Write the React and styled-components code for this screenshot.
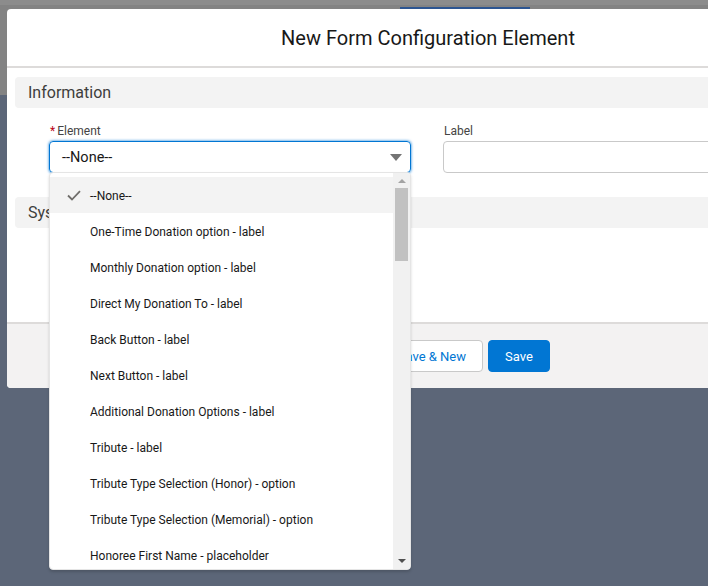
import React from "react";
import styled, { createGlobalStyle } from "styled-components";

const Global = createGlobalStyle`
  html, body { margin: 0; padding: 0; }
  body { font-family: "Roboto", "Open Sans", sans-serif; color: #181818; }
  * { box-sizing: border-box; }
`;

const Page = styled.div`
  position: relative;
  width: 708px;
  height: 586px;
  overflow: hidden;
  background: #5c6678;
`;

const BehindHeader = styled.div`
  height: 95px;
  background: #838383;
  border-top: 5px solid #8c8c8c;
  position: relative;
`;

const BehindTab = styled.div`
  position: absolute;
  top: 2px;
  left: 400px;
  width: 130px;
  height: 3px;
  background: #2d5591;
`;

const Modal = styled.div`
  position: absolute;
  top: 9px;
  left: 7px;
  width: 842px;
  background: #fff;
  border-radius: 4px;
  display: flex;
  flex-direction: column;
`;

const Header = styled.div`
  height: 59px;
  display: flex;
  align-items: center;
  justify-content: center;
  border-bottom: 2px solid #dddbda;
`;

const Title = styled.h2`
  margin: 0;
  font-size: 20px;
  font-weight: 400;
  color: #181818;
`;

const Body = styled.div`
  height: 254px;
  padding: 9px 0 0 8px;
  display: flex;
  flex-direction: column;
`;

const SectionHeader = styled.div`
  height: 31px;
  background: #f3f3f3;
  border-radius: 4px 0 0 4px;
  display: flex;
  align-items: center;
  padding-left: 13px;
  font-size: 16px;
  color: #3e3e3c;
  margin-top: ${(p) => p.$top || 0}px;
`;

const FormRow = styled.div`
  display: grid;
  grid-template-columns: 362px 380px;
  column-gap: 32px;
  padding: 14px 0 0 34px;
`;

const Field = styled.div`
  display: flex;
  flex-direction: column;
  position: relative;
`;

const FieldLabel = styled.label`
  font-size: 12px;
  color: #444;
  height: 19px;
  line-height: 18px;
  padding-left: 1px;
`;

const Required = styled.abbr`
  color: #ba0517;
  text-decoration: none;
  margin-right: 2px;
`;

const Combo = styled.div`
  height: 32px;
  border: 1px solid #0176d3;
  border-radius: 4px;
  box-shadow: 0 0 3px #0176d3;
  display: flex;
  align-items: center;
  justify-content: space-between;
  padding: 0 8px 0 12px;
  font-size: 14.5px;
  color: #181818;
`;

const Caret = styled.span`
  width: 0;
  height: 0;
  border-left: 6px solid transparent;
  border-right: 6px solid transparent;
  border-top: 7px solid #747474;
  margin-top: 1px;
`;

const TextInput = styled.div`
  height: 32px;
  border: 1px solid #c9c9c9;
  border-radius: 4px;
  background: #fff;
`;

const Footer = styled.div`
  height: 66px;
  background: #f3f2f2;
  border-top: 2px solid #dddbda;
  border-radius: 0 0 4px 4px;
  display: flex;
  align-items: center;
  justify-content: center;
  gap: 5px;
  padding-right: 4px;
`;

const Button = styled.button`
  height: 32px;
  padding: 0 16px;
  border-radius: 4px;
  font-family: inherit;
  font-size: 13px;
  border: 1px solid ${(p) => (p.$brand ? "#0176d3" : "#c9c9c9")};
  background: ${(p) => (p.$brand ? "#0176d3" : "#fff")};
  color: ${(p) => (p.$brand ? "#fff" : "#0176d3")};
`;

const Dropdown = styled.div`
  position: absolute;
  top: 172px;
  left: 49px;
  width: 362px;
  height: 398px;
  background: #fff;
  border: 1px solid #e5e5e5;
  border-radius: 4px;
  box-shadow: 0 2px 3px rgba(0, 0, 0, 0.16);
  display: flex;
  overflow: hidden;
`;

const List = styled.ul`
  list-style: none;
  margin: 0;
  padding: 4px 0 0;
  flex: 1;
  overflow: hidden;
`;

const Option = styled.li`
  height: 36px;
  display: flex;
  align-items: center;
  padding: 1px 0 0 17px;
  font-size: 12px;
  color: #181818;
  background: ${(p) => (p.$selected ? "#f3f3f3" : "transparent")};
`;

const CheckSlot = styled.span`
  width: 23px;
  display: flex;
  align-items: center;
  margin-top: -1px;
`;

const Scrollbar = styled.div`
  width: 17px;
  background: #f1f1f1;
  display: flex;
  flex-direction: column;
  align-items: center;
  padding: 0 1px;
`;

const Arrow = styled.span`
  width: 0;
  height: 0;
  border-left: 4px solid transparent;
  border-right: 4px solid transparent;
  ${(p) => (p.$down ? "border-top: 4px solid #505050;" : "border-bottom: 4px solid #a3a3a3;")}
  margin: ${(p) => (p.$down ? "auto 0 6px" : "6px 0 0")};
`;

const Thumb = styled.div`
  width: 13px;
  height: 73px;
  background: #c1c1c1;
  margin-top: 5px;
`;

const options = [
  "--None--",
  "One-Time Donation option - label",
  "Monthly Donation option - label",
  "Direct My Donation To - label",
  "Back Button - label",
  "Next Button - label",
  "Additional Donation Options - label",
  "Tribute - label",
  "Tribute Type Selection (Honor) - option",
  "Tribute Type Selection (Memorial) - option",
  "Honoree First Name - placeholder",
];

const Check = () => (
  <svg width="14" height="11" viewBox="0 0 14 11">
    <path d="M1 5.5 L5 9.5 L13 1.2" fill="none" stroke="#706e6b" strokeWidth="1.8" />
  </svg>
);

export default function App() {
  return (
    <>
      <Global />
      <Page>
        <BehindHeader>
          <BehindTab />
        </BehindHeader>
        <Modal>
          <Header>
            <Title>New Form Configuration Element</Title>
          </Header>
          <Body>
            <SectionHeader>Information</SectionHeader>
            <FormRow>
              <Field>
                <FieldLabel>
                  <Required>*</Required>Element
                </FieldLabel>
                <Combo>
                  <span>--None--</span>
                  <Caret />
                </Combo>
              </Field>
              <Field>
                <FieldLabel>Label</FieldLabel>
                <TextInput />
              </Field>
            </FormRow>
            <SectionHeader $top={24}>System Information</SectionHeader>
          </Body>
          <Footer>
            <Button>Cancel</Button>
            <Button>Save &amp; New</Button>
            <Button $brand>Save</Button>
          </Footer>
        </Modal>
        <Dropdown>
          <List>
            {options.map((o, i) => (
              <Option key={o} $selected={i === 0}>
                <CheckSlot>{i === 0 && <Check />}</CheckSlot>
                {o}
              </Option>
            ))}
          </List>
          <Scrollbar>
            <Arrow />
            <Thumb />
            <Arrow $down />
          </Scrollbar>
        </Dropdown>
      </Page>
    </>
  );
}
